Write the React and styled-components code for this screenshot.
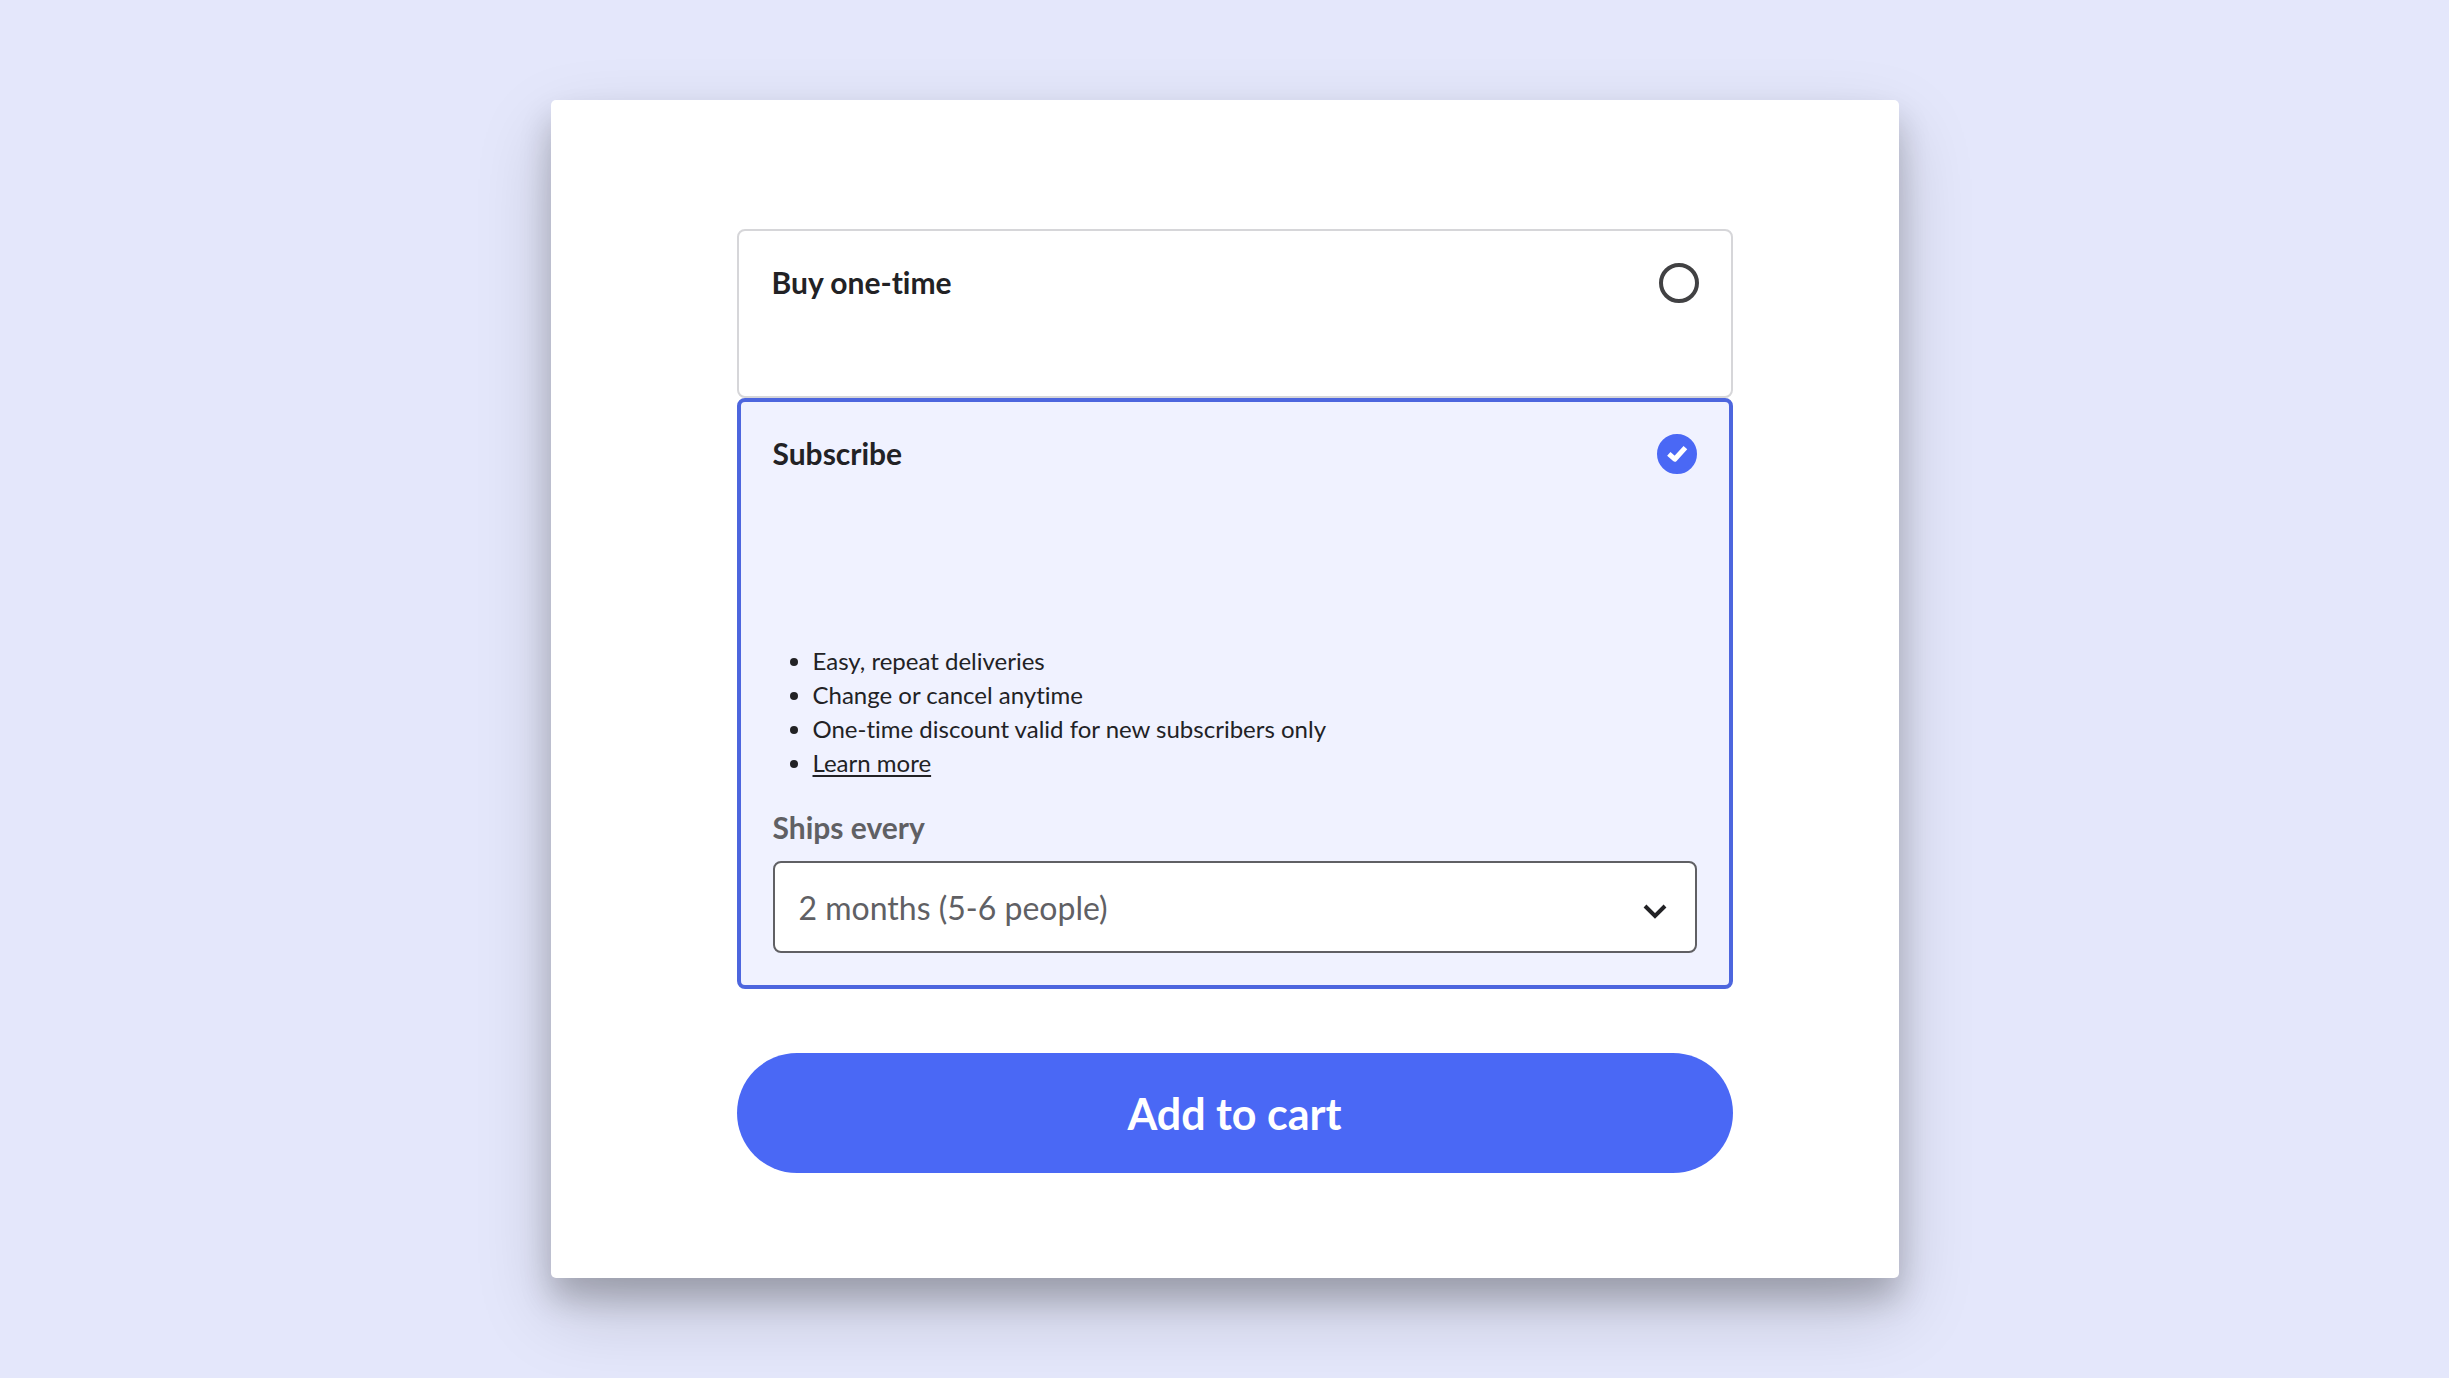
import styled, { createGlobalStyle } from "styled-components";
import { useState } from "react";

export default function App() {
  const [plan, setPlan] = useState("subscribe");
  const [interval, setInterval] = useState("2");

  return (
    <>
      <GlobalStyle />
      <Page>
        <Card>
          <PurchaseForm onSubmit={(e) => e.preventDefault()}>
            <Option $selected={plan === "once"}>
              <OptionHeader>
                Buy one-time
                <PlanRadio plan="once" current={plan} onChange={setPlan} />
              </OptionHeader>
              <PriceSpace $size={61} />
            </Option>

            <Option $selected={plan === "subscribe"}>
              <OptionHeader>
                Subscribe
                <PlanRadio plan="subscribe" current={plan} onChange={setPlan} />
              </OptionHeader>
              <PriceSpace $size={170} />
              <Benefits>
                <li>Easy, repeat deliveries</li>
                <li>Change or cancel anytime</li>
                <li>One-time discount valid for new subscribers only</li>
                <li>
                  <a href="#learn-more">Learn more</a>
                </li>
              </Benefits>
              <FieldLabel htmlFor="interval">Ships every</FieldLabel>
              <SelectBox>
                <select
                  id="interval"
                  value={interval}
                  onChange={(e) => setInterval(e.target.value)}
                >
                  <option value="2">2 months (5-6 people)</option>
                </select>
                <svg width="24" height="16" viewBox="0 0 24 16">
                  <path d="M2 2 L12 12 L22 2" />
                </svg>
              </SelectBox>
            </Option>

            <CartButton type="submit">Add to cart</CartButton>
          </PurchaseForm>
        </Card>
      </Page>
    </>
  );
}

function PlanRadio({ plan, current, onChange }) {
  return (
    <Radio>
      <input
        type="radio"
        name="plan"
        value={plan}
        checked={current === plan}
        onChange={() => onChange(plan)}
      />
      {current === plan && (
        <svg viewBox="0 0 40 40">
          <path d="M11.800 19.800 L17.800 25.200 L28.400 13.600" />
        </svg>
      )}
    </Radio>
  );
}

const GlobalStyle = createGlobalStyle`
  * {
    box-sizing: border-box;
  }

  body {
    margin: 0;
    background: #e4e7fb;
    color: #222225;
    font-family: Lato, "Open Sans", sans-serif;
    font-variant-ligatures: none;
  }
`;

const Page = styled.main`
  display: flex;
  justify-content: center;
  align-items: center;
  min-height: 100vh;
  padding: 100px 40px;
`;

const Card = styled.section`
  width: 100%;
  max-width: 1348px;
  padding: 129px 166px 105px 186px;
  background: #ffffff;
  border-radius: 5px;
  box-shadow: 0 20px 32px rgba(0, 0, 0, 0.2), 0 32px 76px rgba(0, 0, 0, 0.18);

  @media (max-width: 1000px) {
    padding: 40px;
  }
`;

const PurchaseForm = styled.form`
  display: flex;
  flex-direction: column;
`;

const Option = styled.div`
  padding: ${(props) => (props.$selected ? "32px" : "32px 32px 32px 33px")};
  border: ${(props) =>
    props.$selected ? "4px solid #4d66de" : "2px solid #d6d6d9"};
  border-radius: 8px;
  background: ${(props) => (props.$selected ? "#f0f2ff" : "#ffffff")};
`;

const OptionHeader = styled.label`
  display: flex;
  justify-content: space-between;
  align-items: flex-start;
  font-size: 30px;
  font-weight: 700;
  line-height: 38px;
  cursor: pointer;
`;

const PriceSpace = styled.div`
  height: ${(props) => props.$size}px;
`;

const Radio = styled.span`
  display: grid;
  width: 40px;
  height: 40px;

  input {
    grid-area: 1 / 1;
    appearance: none;
    width: 40px;
    height: 40px;
    margin: 0;
    border: 4px solid #414143;
    border-radius: 50%;
    cursor: pointer;
  }

  input:checked {
    border-color: #4a68f5;
    background: #4a68f5;
  }

  svg {
    grid-area: 1 / 1;
    fill: none;
    stroke: #ffffff;
    stroke-width: 5;
    stroke-linejoin: round;
    pointer-events: none;
  }
`;

const Benefits = styled.ul`
  margin: 0 0 28px;
  padding-left: 40px;
  font-size: 24px;
  line-height: 34px;

  a {
    color: inherit;
    text-underline-offset: 3px;
    text-decoration-thickness: 2px;
  }
`;

const FieldLabel = styled.label`
  display: block;
  margin-bottom: 15px;
  color: #606064;
  font-size: 30px;
  font-weight: 700;
  line-height: 38px;
`;

const SelectBox = styled.div`
  display: grid;
  align-items: center;

  select {
    grid-area: 1 / 1;
    appearance: none;
    width: 100%;
    height: 92px;
    padding: 0 80px 0 24px;
    border: 2px solid #606064;
    border-radius: 8px;
    background: #ffffff;
    color: #606064;
    font-family: inherit;
    font-size: 32px;
  }

  svg {
    grid-area: 1 / 1;
    justify-self: end;
    margin: 10px 30px 0 0;
    fill: none;
    stroke: #222225;
    stroke-width: 4;
    pointer-events: none;
  }
`;

const CartButton = styled.button`
  height: 120px;
  margin-top: 64px;
  border: none;
  border-radius: 60px;
  background: #4a68f5;
  color: #ffffff;
  font-family: inherit;
  font-size: 43px;
  font-weight: 700;
  cursor: pointer;
`;
